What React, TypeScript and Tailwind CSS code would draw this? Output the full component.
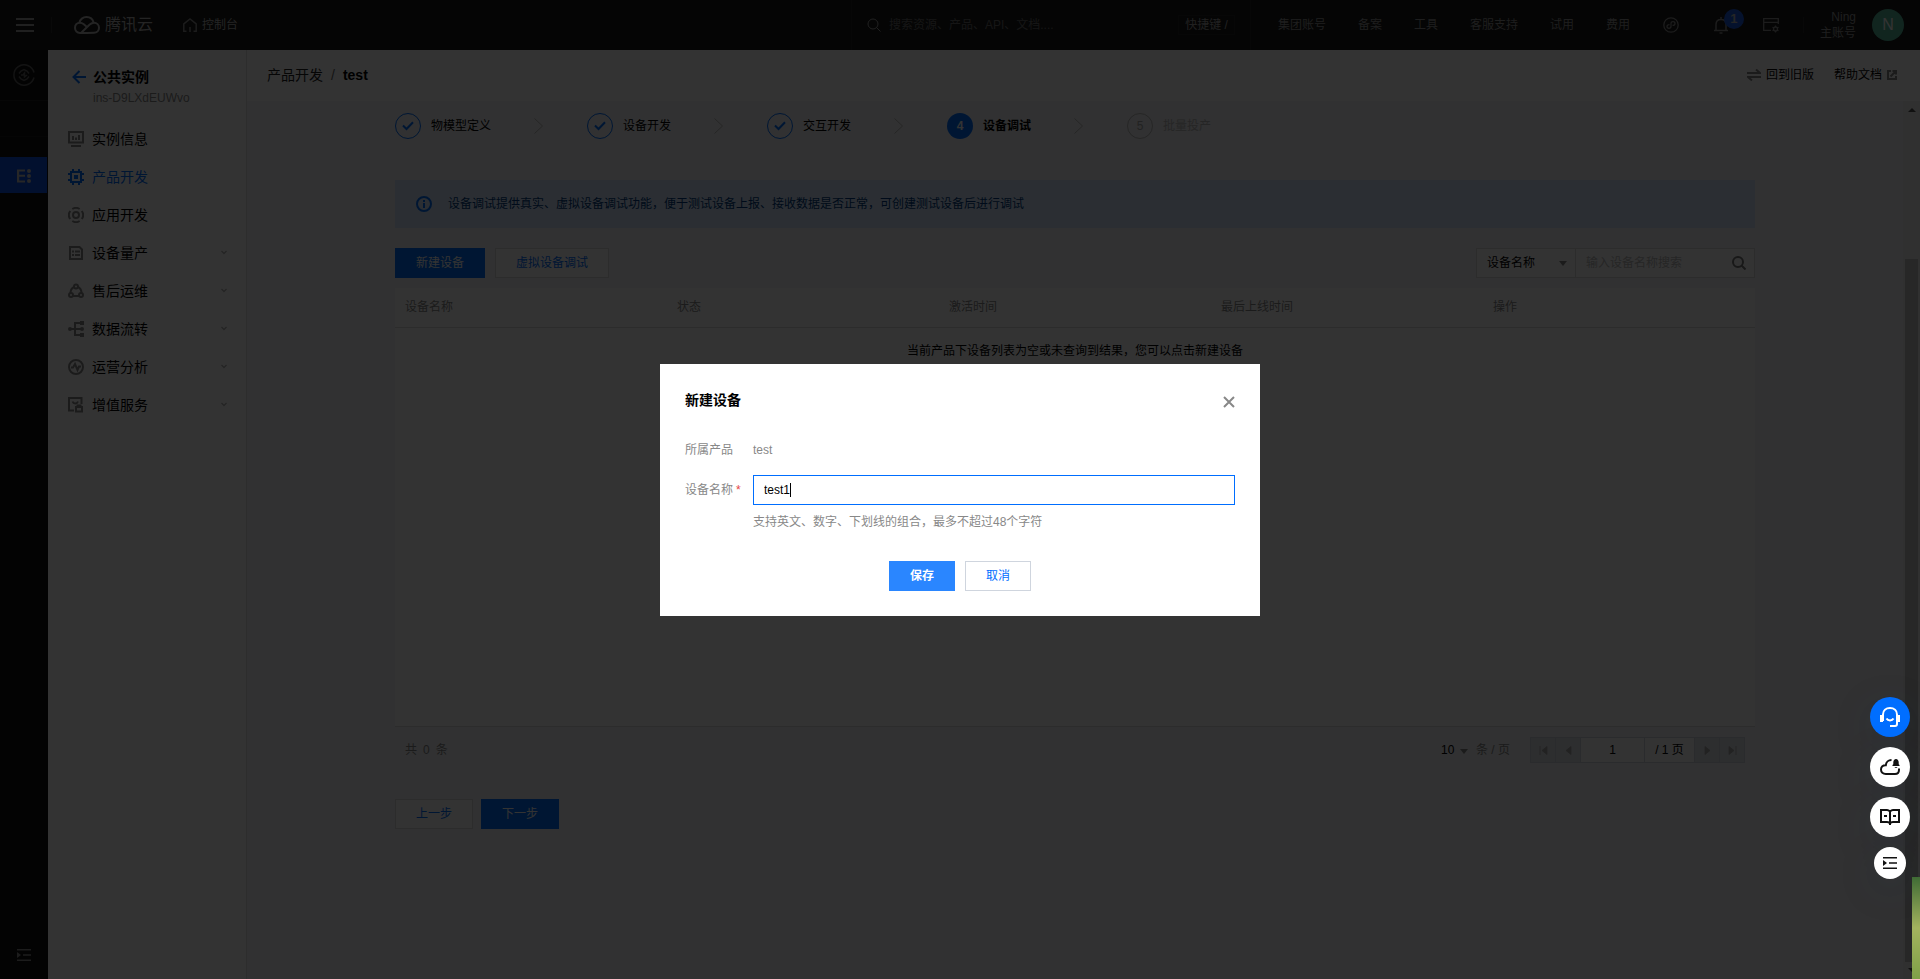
import React, { useState } from 'react';

const navLinks = ['集团账号', '备案', '工具', '客服支持', '试用', '费用'];

const steps = [
  { title: '物模型定义', status: 'done' },
  { title: '设备开发', status: 'done' },
  { title: '交互开发', status: 'done' },
  { title: '设备调试', status: 'current' },
  { title: '批量投产', status: 'wait' },
];

const columns = ['设备名称', '状态', '激活时间', '最后上线时间', '操作'];

const menuItems = [
  {
    label: '实例信息',
    icon: (
      <>
        <path d="M1 1h14v10.500H1z" />
        <path d="M5 5v4M8 6.500V9M11 4v5M3 15h10" />
      </>
    ),
  },
  {
    label: '产品开发',
    active: true,
    icon: (
      <>
        <path d="M3 3h10v10H3z" />
        <path d="M5 0v3M11 0v3M5 13v3M11 13v3M0 5h3M0 11h3M13 5h3M13 11h3" />
        <path d="M6 6h4v4H6z" fill="currentColor" stroke="none" />
      </>
    ),
  },
  {
    label: '应用开发',
    icon: (
      <>
        <circle cx="8" cy="8" r="3" />
        <path d="M4.300 2a7 7 0 0 1 7.400 0M4.300 14a7 7 0 0 0 7.400 0M2.200 4a7 7 0 0 0 0 8M13.800 4a7 7 0 0 1 0 8" />
      </>
    ),
  },
  {
    label: '设备量产',
    expandable: true,
    icon: (
      <>
        <path d="M2 2h9.500L14 4.500V14H2z" />
        <path d="M4 6.500h2M7 6.500h5M4 10h2M7 10h5" />
      </>
    ),
  },
  {
    label: '售后运维',
    expandable: true,
    icon: (
      <>
        <circle cx="8" cy="3.500" r="2" />
        <circle cx="3" cy="12" r="2" />
        <circle cx="13" cy="12" r="2" />
        <path d="M6 4C4 5 2.500 7.500 2.500 10M10 4c2 1 3.500 3.500 3.500 6M5 13h6" />
      </>
    ),
  },
  {
    label: '数据流转',
    expandable: true,
    icon: (
      <>
        <path d="M2 8h13M12 2H7v12h5" />
        <path d="M12 0h4v4h-4zM12 12h4v4h-4z" fill="currentColor" stroke="none" />
        <circle cx="2" cy="8" r="2" fill="currentColor" stroke="none" />
        <circle cx="14" cy="8" r="2" fill="currentColor" stroke="none" />
      </>
    ),
  },
  {
    label: '运营分析',
    expandable: true,
    icon: (
      <>
        <circle cx="8" cy="8" r="7" />
        <path d="M3 8.500h2L7 5l2.500 6L11 7.500h2" />
      </>
    ),
  },
  {
    label: '增值服务',
    expandable: true,
    icon: (
      <>
        <path d="M6 13.500H1V1h12.500v6" />
        <path d="M4.500 4.500c1 2.500 4.500 2.500 5.500 0M8 10h6v4.500H8zM9.500 10V8.500h3V10" />
      </>
    ),
  },
];

const SearchIcon = ({ className }: { className?: string }) => (
  <svg className={className} width="14" height="14" viewBox="0 0 14 14" fill="none" stroke="currentColor">
    <circle cx="6" cy="6" r="5" />
    <path d="M9.500 9.500 13.500 13.500" />
  </svg>
);

const CollapseIcon = () => (
  <svg width="14" height="12" viewBox="0 0 14 12" fill="currentColor">
    <path d="M0 0h14v1.500H0zM6 5.200h8v1.500H6zM0 10.500h14V12H0zM0 3l4 3-4 3z" />
  </svg>
);

const Header = () => (
  <header className="flex h-[50px] shrink-0 items-center bg-[#191919] text-xs text-[#b4b4b4]">
    <button type="button" aria-label="菜单" className="flex h-full w-[51px] items-center pl-4">
      <svg width="18" height="14" viewBox="0 0 18 14" fill="#a0a0a0">
        <path d="M0 0h18v2H0zM0 6h18v2H0zM0 12h18v2H0z" />
      </svg>
    </button>
    <div className="h-4 w-px bg-[#2f2f2f]" />
    <a href="#" className="ml-[22px] flex items-center gap-[5px] text-base">
      <svg width="26" height="18" viewBox="0 0 26 18" fill="none" stroke="currentColor" strokeWidth="2">
        <path d="M5.500 6.500C6 3.500 9 1 12.500 1c3.600 0 6.300 2.200 7 5.300M13 16.900l7-.1c3 0 5-2.200 5-5 0-3-2.300-5.100-5-5.100-1.700 0-3 .7-4.300 1.900L7 17" />
        <path d="M13 11 9.500 8C8.500 7.200 7.500 6.700 6 6.700c-2.700 0-5 2-5 5.100 0 2.900 2.200 5.100 5 5.100h7.500" />
      </svg>
      腾讯云
    </a>
    <a href="#" className="ml-[30px] flex items-center gap-[5px]">
      <svg width="14" height="14" viewBox="0 0 14 14" fill="none" stroke="#8a8a8a" strokeWidth="1.500">
        <path d="M3.500 13.200H.8V5.800L7 1l6.200 4.800v7.400h-2.700M7 9v5" />
      </svg>
      控制台
    </a>
    <div className="ml-auto flex h-full w-[400px] items-center border-x border-[#242424] px-[15px]">
      <SearchIcon className="shrink-0 text-[#a0a0a0]" />
      <input
        type="text"
        aria-label="搜索"
        placeholder="搜索资源、产品、API、文档...."
        className="ml-2 min-w-0 flex-1 outline-none placeholder:text-[#6c6c6c]"
      />
      <span className="flex h-5 items-center border border-[#262626] px-[6px] text-[#a0a0a0]">快捷键 /</span>
    </div>
    <nav className="ml-[27px] flex items-center gap-8 text-[#949494]">
      {navLinks.map((link) => (
        <a key={link} href="#">{link}</a>
      ))}
    </nav>
    <div className="ml-[33px] flex items-center text-[#8c8c8c]">
      <button type="button" aria-label="小程序">
        <svg width="16" height="16" viewBox="0 0 16 16" fill="none" stroke="currentColor" strokeWidth="1.300">
          <circle cx="8" cy="8" r="7.200" />
          <path d="M6.500 7.600c-1.700 0-2.500 1-2.500 2s.9 1.700 2 1.700S8 10.500 8 9.300V6.500c0-1 .8-1.800 2-1.800s2 .8 2 1.700-.8 1.900-2.500 1.900" />
        </svg>
      </button>
      <button type="button" aria-label="消息" className="relative ml-[34px]">
        <svg width="16" height="17" viewBox="0 0 16 17" fill="none" stroke="currentColor" strokeWidth="1.500">
          <path d="M1 13.500h14M3 13.500V7.500c0-3 2-5 5-5s5 2 5 5v6M8 0v2.500M6.500 16h3" />
        </svg>
        <span className="absolute -top-2 left-[11px] flex size-5 items-center justify-center rounded-full bg-[#1a5ae0] text-[13px] font-bold text-[#bbb]">
          1
        </span>
      </button>
      <button type="button" aria-label="工作台设置" className="ml-[34px]">
        <svg width="16" height="15" viewBox="0 0 16 15" fill="none" stroke="currentColor" strokeWidth="1.300">
          <path d="M8 12.300H.7V.7h14.600V6M.7 4.300h14.600" />
          <circle cx="12.500" cy="11" r="2" />
          <path d="M12.500 7.500V9M12.500 13v1.500M9.500 9.300l1.300.7M14.200 12l1.300.7M9.500 12.700l1.300-.7M14.200 10l1.300-.7" />
        </svg>
      </button>
    </div>
    <div className="ml-6 h-4 w-px bg-[#2c2c2c]" />
    <div className="ml-4 text-right leading-4 text-[#969696]">
      <div>Ning</div>
      <div>主账号</div>
    </div>
    <div className="mx-4 flex size-8 items-center justify-center rounded-full bg-[#55b99c] text-base text-white">N</div>
  </header>
);

const Rail = () => (
  <aside className="flex w-12 shrink-0 flex-col items-center bg-[#111] text-[#8c8c8c]">
    <div className="flex h-[51px] w-full items-center justify-center border-b border-[#1e1e1e]">
      <svg width="22" height="22" viewBox="0 0 22 22" fill="none" stroke="#606060" strokeWidth="1.500">
        <path d="M21 8.500a10.200 10.200 0 1 0 0 5" />
        <path d="M6 9.500 8 7l3-1.500L14 7l2 2.500M6 12.500 8 15l3 1.500 3-1.500 2-2.500M8 11h2l1.500-2v4L14 11" />
      </svg>
    </div>
    <div className="h-9 w-full border-b border-[#1a1a1a]" />
    <a href="#" aria-label="物联网开发平台" className="mt-5 mr-px flex h-9 w-[47px] items-center justify-center bg-[#0a52e6] pt-px text-[#c0c0c0]">
      <svg width="14" height="14" viewBox="0 0 14 14" fill="currentColor">
        <path d="M0 .5h8v2H2.200v3.300H8v2H2.200v3.700H8v2H0z" />
        <circle cx="12" cy="2" r="2" />
        <circle cx="12" cy="7" r="2" />
        <circle cx="12" cy="12" r="2" />
      </svg>
    </a>
    <button type="button" aria-label="展开" className="mt-auto mb-[18px]">
      <CollapseIcon />
    </button>
  </aside>
);

const SideMenu = () => (
  <aside className="w-[199px] shrink-0 border-r border-[#e0e0e0] bg-white">
    <div className="flex gap-[7px] pt-[18px] pl-6">
      <a href="#" aria-label="返回" className="mt-[2px] text-[#006eff]">
        <svg width="14" height="14" viewBox="0 0 14 14" fill="none" stroke="currentColor" strokeWidth="2">
          <path d="M14 7H2M7.500 1l-6 6 6 6" />
        </svg>
      </a>
      <div>
        <div className="text-sm leading-[18px] font-bold">公共实例</div>
        <div className="text-xs leading-6 text-[#888]">ins-D9LXdEUWvo</div>
      </div>
    </div>
    <ul className="mt-[10px]">
      {menuItems.map((item) => (
        <li key={item.label}>
          <a
            href="#"
            className={`flex h-[38px] items-center gap-2 pr-[19px] pl-5 text-sm ${item.active ? 'text-[#006eff]' : 'text-black'}`}
          >
            <svg
              width="16"
              height="16"
              viewBox="0 0 16 16"
              fill="none"
              stroke="currentColor"
              strokeWidth="2"
              className={item.active ? '' : 'text-[#888]'}
            >
              {item.icon}
            </svg>
            {item.label}
            {item.expandable && (
              <svg width="6" height="5" viewBox="0 0 6 5" fill="none" stroke="#b4b4b4" strokeWidth="1.300" className="mb-[2px] ml-auto">
                <path d="M.5 1 3 3.500 5.500 1" />
              </svg>
            )}
          </a>
        </li>
      ))}
    </ul>
  </aside>
);

const Steps = () => (
  <ol className="flex h-[26px] items-center">
    {steps.map((step, i) => (
      <li key={step.title} className="flex items-center">
        {step.status === 'done' && (
          <span className="flex size-[26px] items-center justify-center rounded-full border border-[#006eff]">
            <svg width="12" height="10" viewBox="0 0 12 10" fill="none" stroke="#006eff" strokeWidth="2">
              <path d="M1 4.500 4.500 8 11 1.200" />
            </svg>
          </span>
        )}
        {step.status === 'current' && (
          <span className="flex size-[26px] items-center justify-center rounded-full bg-[#006eff] text-xs font-bold text-white">
            {i + 1}
          </span>
        )}
        {step.status === 'wait' && (
          <span className="flex size-[26px] items-center justify-center rounded-full border border-[#bbb] text-xs text-[#aaa]">
            {i + 1}
          </span>
        )}
        <span
          className={`ml-[10px] text-xs ${
            step.status === 'current' ? 'font-bold text-black' : step.status === 'wait' ? 'text-[#bbb]' : 'text-black'
          }`}
        >
          {step.title}
        </span>
        {i < steps.length - 1 && (
          <svg width="9" height="16" viewBox="0 0 9 16" fill="none" stroke="#bbb" className="mr-[44px] ml-[43px]">
            <path d="M.5.500 8.500 8 .5 15.500" />
          </svg>
        )}
      </li>
    ))}
  </ol>
);

const CaretDown = ({ className }: { className?: string }) => (
  <svg width="8" height="5" viewBox="0 0 8 5" fill="#888" className={className}>
    <path d="M0 0h8L4 5z" />
  </svg>
);

const Pagination = () => (
  <div className="flex h-[46px] items-center px-[10px] text-[#888]">
    <span className="flex gap-[6px]">
      共<span>0</span>条
    </span>
    <div className="relative ml-auto text-black">
      <select aria-label="每页条数" className="w-[27px] appearance-none outline-none">
        <option>10</option>
      </select>
      <CaretDown className="pointer-events-none absolute top-[7px] right-0" />
    </div>
    <span className="ml-2">条 / 页</span>
    <div className="ml-5 flex h-[26px] border border-[#cfd5de] bg-white">
      {['M1 0v9M8 .5v8L3 4.500z', 'M7 .5v8L2 4.500z'].map((d, i) => (
        <button key={d} type="button" aria-label={i ? '上一页' : '首页'} disabled className="flex w-[25px] items-center justify-center border-r border-[#cfd5de] bg-[#e0e4ea]">
          <svg width="9" height="9" viewBox="0 0 9 9" fill="#aaa" stroke="#aaa"><path d={d} strokeWidth=".8" /></svg>
        </button>
      ))}
      <input type="text" aria-label="页码" defaultValue="1" className="w-16 border-r border-[#cfd5de] text-center text-black outline-none" />
      <span className="flex w-[49px] items-center justify-center text-black">/ 1 页</span>
      {['M2 .5v8l5-4z', 'M8 0v9M1 .5v8l5-4z'].map((d, i) => (
        <button key={d} type="button" aria-label={i ? '末页' : '下一页'} disabled className="flex w-[25px] items-center justify-center border-l border-[#cfd5de] bg-[#e0e4ea]">
          <svg width="9" height="9" viewBox="0 0 9 9" fill="#aaa" stroke="#aaa"><path d={d} strokeWidth=".8" /></svg>
        </button>
      ))}
    </div>
  </div>
);

const DeviceDebug = () => (
  <div className="mx-auto max-w-[1360px] pt-3 text-xs">
    <Steps />
    <div className="mt-[41px] flex h-12 items-center gap-4 bg-[#d5e7ff] px-[21px] text-[#003b80]">
      <svg width="16" height="16" viewBox="0 0 16 16" fill="none" stroke="#006eff" strokeWidth="2">
        <circle cx="8" cy="8" r="7" />
        <path d="M8 4v2M8 7v5" />
      </svg>
      设备调试提供真实、虚拟设备调试功能，便于测试设备上报、接收数据是否正常，可创建测试设备后进行调试
    </div>

    <div className="mt-5 flex h-[30px] items-stretch">
      <button type="button" className="w-[90px] bg-[#006eff] text-white">新建设备</button>
      <button type="button" className="ml-[10px] w-[114px] border border-[#dcdcdc] bg-white text-[#006eff]">虚拟设备调试</button>
      <div className="ml-auto flex w-[279px] border border-[#dcdcdc] bg-white">
        <div className="relative w-[99px] border-r border-[#dcdcdc]">
          <select aria-label="搜索字段" className="h-full w-full appearance-none px-[10px] outline-none">
            <option>设备名称</option>
          </select>
          <CaretDown className="pointer-events-none absolute top-3 right-2" />
        </div>
        <input
          type="text"
          aria-label="设备搜索"
          placeholder="输入设备名称搜索"
          className="min-w-0 flex-1 pl-[10px] outline-none placeholder:text-[#bbb]"
        />
        <button type="button" aria-label="搜索" className="px-2 text-[#777]">
          <SearchIcon className="stroke-2" />
        </button>
      </div>
    </div>

    <div className="mt-[10px] min-h-[439px] border-b border-[#ddd] bg-white">
      <table className="w-full table-fixed text-left">
        <thead>
          <tr className="h-[39px] border-b border-[#ddd] text-[#888]">
            {columns.map((col) => (
              <th key={col} className="px-[10px] font-normal">{col}</th>
            ))}
          </tr>
        </thead>
        <tbody>
          <tr>
            <td colSpan={5} className="h-[48px] text-center">当前产品下设备列表为空或未查询到结果，您可以点击新建设备</td>
          </tr>
        </tbody>
      </table>
    </div>
    <Pagination />

    <div className="mt-[26px] flex h-[30px] gap-2">
      <button type="button" className="w-[78px] border border-[#dcdcdc] bg-white text-[#006eff]">上一步</button>
      <button type="button" className="w-[78px] bg-[#006eff] text-white">下一步</button>
    </div>
  </div>
);

const Scrollbar = () => (
  <div className="flex w-[17px] shrink-0 flex-col items-center bg-[#f1f1f1]">
    <svg width="8" height="4" viewBox="0 0 8 4" fill="#505050" className="mt-[7px]">
      <path d="M4 0l4 4H0z" />
    </svg>
    <div className="mt-auto h-[703px] max-h-[81%] w-[13px] bg-[#c1c1c1]" />
    <svg width="8" height="4" viewBox="0 0 8 4" fill="#505050" className="mt-[6px] mb-[7px]">
      <path d="M0 0h8L4 4z" />
    </svg>
  </div>
);

const CreateDeviceDialog = () => {
  const [name, setName] = useState('test1');

  return (
    <div role="dialog" aria-label="新建设备" className="w-[600px] bg-white px-[25px] pt-[25px] pb-[25px] text-xs text-[#888]">
      <div className="flex h-[22px] items-center justify-between">
        <h3 className="text-sm font-bold text-black">新建设备</h3>
        <button type="button" aria-label="关闭" className="mt-1">
          <svg width="12" height="12" viewBox="0 0 12 12" fill="none" stroke="#888" strokeWidth="2">
            <path d="M1 1l10 10M11 1 1 11" />
          </svg>
        </button>
      </div>
      <div className="mt-[29px] flex h-5">
        <span className="w-[68px] leading-5">所属产品</span>
        <span className="leading-5">test</span>
      </div>
      <div className="mt-[15px] flex items-center">
        <label htmlFor="device-name" className="w-[68px]">
          设备名称<span className="ml-[3px] text-[#e54545]">*</span>
        </label>
        <div className="relative h-[30px] flex-1 border border-[#006eff]">
          <input
            id="device-name"
            type="text"
            value={name}
            onChange={(e) => setName(e.target.value)}
            className="h-full w-full px-[10px] text-black caret-transparent outline-none"
          />
          {/* text cursor after the typed value */}
          <span aria-hidden="true" className="pointer-events-none absolute inset-y-0 left-[10px] my-[7px] border-r border-black text-transparent">
            {name}
          </span>
        </div>
      </div>
      <p className="mt-2 pl-[68px] leading-[18px]">支持英文、数字、下划线的组合，最多不超过48个字符</p>
      <div className="mt-[30px] flex h-[30px] justify-center gap-[10px]">
        <button type="button" className="w-[66px] bg-[#2a86ff] font-bold text-white">保存</button>
        <button type="button" className="w-[66px] border border-[#cfd5de] text-[#006eff]">取消</button>
      </div>
    </div>
  );
};

const FloatTools = () => (
  <div className="fixed right-[10px] bottom-[100px] z-20 flex flex-col items-center gap-[10px] text-[#111]">
    <button type="button" aria-label="在线客服" className="flex size-10 items-center justify-center rounded-full bg-[#006eff] text-white shadow-[0_10px_40px_rgba(30,60,90,0.15)]">
      <svg width="20" height="20" viewBox="0 0 20 20" fill="none" stroke="currentColor" strokeWidth="2">
        <path d="M3 14V7.500C3 3.500 6 1 10 1s7 2.500 7 6.500V17c0 1.300-.8 2-2 2h-5M6.500 11.500c1.500 2.500 5.500 2.500 7 0" />
        <path d="M0 8h3v7H0zM17 8h3v7h-3z" fill="currentColor" stroke="none" />
      </svg>
    </button>
    <button type="button" aria-label="消息提醒" className="flex size-10 items-center justify-center rounded-full bg-white shadow-[0_10px_40px_rgba(30,60,90,0.15)]">
      <svg width="20" height="16" viewBox="0 0 20 16" fill="none" stroke="currentColor" strokeWidth="2">
        <path d="M11.500 1C8.500 1 6 3 5.800 6.200 3 6 1 8 1 10.600S3 15 5.800 15H15c2.500 0 4-1.700 4-4.200V9.500" />
        <path d="M12.500 7V6l.8-.8V3.200C13.300 1.300 14.500 0 16 0s2.700 1.300 2.700 3.200v2l.8.8v1zM14.800 8h2.400v.8h-2.400z" fill="currentColor" stroke="none" />
      </svg>
    </button>
    <button type="button" aria-label="帮助文档" className="flex size-10 items-center justify-center rounded-full bg-white shadow-[0_10px_40px_rgba(30,60,90,0.15)]">
      <svg width="20" height="16" viewBox="0 0 20 16" fill="none" stroke="currentColor" strokeWidth="2">
        <path d="M10 2.500C9 1.500 8 1 7 1H1v12h6c1.500 0 2.500.500 3 1.500.5-1 1.500-1.500 3-1.500h6V1h-6c-1 0-2 .5-3 1.500zM10 2.500V16M4 7h3M13 7h3" />
      </svg>
    </button>
    <button type="button" aria-label="收起" className="flex size-8 items-center justify-center rounded-full bg-white shadow-[0_10px_40px_rgba(30,60,90,0.15)]">
      <CollapseIcon />
    </button>
  </div>
);

export default function App() {
  return (
    <div className="flex h-screen flex-col overflow-hidden bg-[#f3f4f7] font-['Liberation_Sans','Noto_Sans_CJK_SC',sans-serif] text-black">
      <Header />
      <div className="flex min-h-0 flex-1">
        <Rail />
        <SideMenu />
        <main className="flex min-w-0 flex-1 flex-col">
          <div className="flex h-[51px] shrink-0 items-center bg-white px-5 pb-[2px] text-sm">
            <a href="#" className="text-[#222]">产品开发</a>
            <span className="mx-2 text-[#666]">/</span>
            <span className="font-bold">test</span>
            <a href="#" className="ml-auto flex items-center gap-[5px] text-xs">
              <svg width="14" height="12" viewBox="0 0 14 12" fill="none" stroke="#888" strokeWidth="2">
                <path d="M0 4h13L9 .5M14 8H1l4 3.500" />
              </svg>
              回到旧版
            </a>
            <a href="#" className="mr-[3px] ml-5 flex items-center gap-[5px] text-xs">
              帮助文档
              <svg width="10" height="10" viewBox="0 0 10 10" fill="none" stroke="#888" strokeWidth="2">
                <path d="M4 1H1v8h8V6M3.500 6.500 8.500 1.500M5.500 1H9v3.500" />
              </svg>
            </a>
          </div>
          <div className="flex min-h-0 flex-1">
            <div className="min-w-0 flex-1">
              <DeviceDebug />
            </div>
            <Scrollbar />
          </div>
        </main>
      </div>

      <div className="fixed inset-0 z-10 flex items-center justify-center bg-black/80">
        <CreateDeviceDialog />
      </div>
      <FloatTools />
      {/* thumbnail peeking in from the right edge */}
      <div className="fixed right-0 bottom-0 z-20 h-[102px] w-2 bg-linear-to-b from-[#3f6b35] via-[#a3b35e] via-50% to-[#7fa048]" />
    </div>
  );
}
